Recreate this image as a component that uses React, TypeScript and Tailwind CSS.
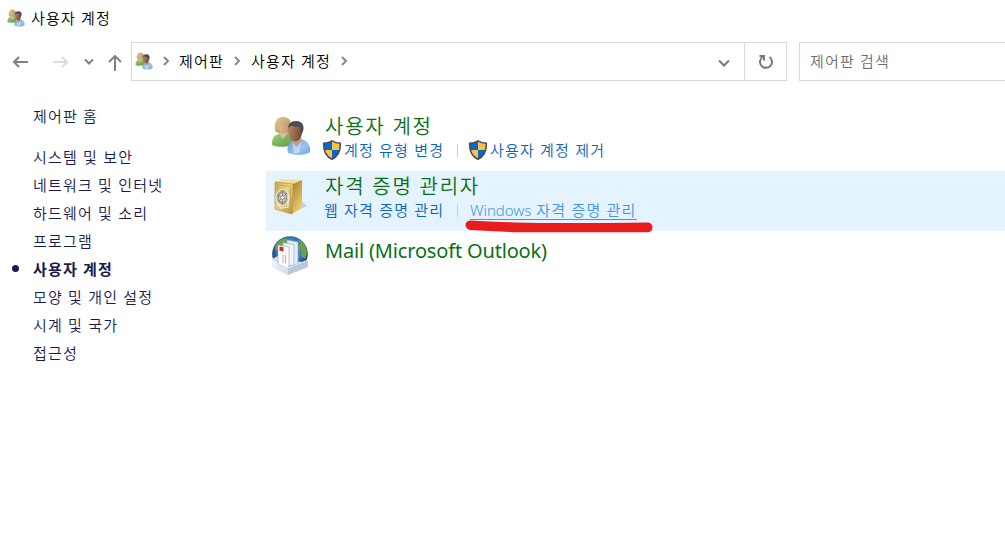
import type { ReactNode } from "react";

function PeopleIcon({ className }: { className: string }) {
  return (
    <svg viewBox="0 0 40 40" className={className} aria-hidden="true">
      <defs>
        <linearGradient id="greenShirt" x1="0" y1="0" x2="1" y2="1">
          <stop offset="0" stopColor="#a3cb80" />
          <stop offset="1" stopColor="#5c9c42" />
        </linearGradient>
        <linearGradient id="blueShirt" x1="0" y1="0" x2="1" y2="1">
          <stop offset="0" stopColor="#6596d3" />
          <stop offset="0.6" stopColor="#9cc4ec" />
          <stop offset="1" stopColor="#6fa1d8" />
        </linearGradient>
        <linearGradient id="blondHair" x1="0" y1="0" x2="1" y2="1">
          <stop offset="0" stopColor="#e3cf91" />
          <stop offset="1" stopColor="#a58a50" />
        </linearGradient>
        <linearGradient id="paleFace" x1="0" y1="0" x2="1" y2="0">
          <stop offset="0" stopColor="#e2b797" />
          <stop offset="1" stopColor="#c79b77" />
        </linearGradient>
        <linearGradient id="darkFace" x1="0" y1="0" x2="1" y2="0.3">
          <stop offset="0" stopColor="#c08a69" />
          <stop offset="1" stopColor="#734d3a" />
        </linearGradient>
      </defs>
      <path d="M1 28C1 21 4 18.500 9 18L16 17C21 18 22 22 21 29C15 31.500 6 31 1.500 29.500Z" fill="url(#greenShirt)" />
      <path d="M4 15C3 7 5 1 12 1C19 1 21 6 20 16C15 19 9 19 4 15Z" fill="url(#blondHair)" />
      <path d="M8 17L12 23L17 16Z" fill="#dfc0a0" />
      <path d="M8 9C10 9 13 8 14.500 6.500L17 9C18 14 15 18 12.500 18C10 18 8 14 8 9Z" fill="url(#paleFace)" />
      <path d="M17 37C15.500 30 17 26 23 24.500L31 23.500C37 25 40 30 39 36C34 39.500 24 40 17 37Z" fill="url(#blueShirt)" />
      <path d="M21 25L25 31L31 24L29 20H21Z" fill="#c99b7c" />
      <path d="M21 26L23 37H28L31 25L26 31Z" fill="#d8e8f7" opacity="0.6" />
      <path d="M17.500 13C17 20 20 25 24 25.500C29 25 32 19 31 12L27 8H19Z" fill="url(#darkFace)" />
      <path d="M17.500 13C16.500 8 20 5 25 5C32 5 34 10 31.500 17L30 15L28.500 11L19 10Z" fill="#4b4d53" />
    </svg>
  );
}

function SafeIcon() {
  return (
    <svg viewBox="0 0 40 40" className="size-10" aria-hidden="true">
      <defs>
        <linearGradient id="safeFront" x1="0" y1="0" x2="1" y2="1">
          <stop offset="0" stopColor="#c9a94f" />
          <stop offset="0.45" stopColor="#ecd482" />
          <stop offset="1" stopColor="#b88c31" />
        </linearGradient>
        <linearGradient id="safeSide" x1="0" y1="0" x2="0.5" y2="1">
          <stop offset="0" stopColor="#a57a28" />
          <stop offset="1" stopColor="#edcc70" />
        </linearGradient>
      </defs>
      <path d="M19 38L36 30L32 26Z" fill="#adbdc8" opacity="0.6" />
      <path d="M4 6L11 3L31 4L22 8Z" fill="#f1df9b" />
      <path d="M22 8L31 4V32L21 38Z" fill="url(#safeSide)" />
      <path d="M4 6L22 8L21 38L4 33Z" fill="url(#safeFront)" stroke="#b08f45" strokeWidth="0.7" />
      <path d="M6.500 9L19.500 10.500V34L6.500 30.500Z" fill="none" stroke="#c4a14e" strokeWidth="0.8" />
      <ellipse cx="11.500" cy="21.500" rx="6.500" ry="8" fill="#aca894" stroke="#eeeadb" strokeWidth="1.200" />
      <ellipse cx="11.500" cy="21.500" rx="4" ry="5" fill="#d8d5c7" stroke="#8f8a78" strokeWidth="1" />
      <path d="M11.500 14V29M6 19L17 24M7 26L16 17" stroke="#7d796d" strokeWidth="0.8" />
      <circle cx="11.500" cy="21.500" r="1.800" fill="#fff" stroke="#6f6a55" strokeWidth="0.7" />
      <path d="M6 28L10 32L17 31V17" fill="none" stroke="#f0eee5" strokeWidth="1.200" />
    </svg>
  );
}

function MailIcon() {
  return (
    <svg viewBox="0 0 40 40" className="size-10" aria-hidden="true">
      <defs>
        <radialGradient id="globe" cx="0.5" cy="0.4" r="0.6">
          <stop offset="0" stopColor="#8bcaf0" />
          <stop offset="0.55" stopColor="#397fc0" />
          <stop offset="1" stopColor="#102b5c" />
        </radialGradient>
        <linearGradient id="tray" x1="0" y1="0" x2="1" y2="1">
          <stop offset="0" stopColor="#f8f9fd" />
          <stop offset="1" stopColor="#c1cade" />
        </linearGradient>
      </defs>
      <circle cx="19" cy="18" r="17.800" fill="url(#globe)" />
      <path d="M4 12C6 6 10 3 15 2L17 5L12 8L9 12L5 15ZM27 3C33 6 36 12 36 17L34 23L30 20L31 15L27 11L29 7Z" fill="#6da345" />
      <path d="M1 23L7 20V24L32 26L37 24V31L17 39L1 31Z" fill="#d9e0ee" />
      <path d="M16 4L27 6V28L16 30Z" fill="#e8edf5" stroke="#8ba0b9" strokeWidth="0.6" />
      <path d="M12 6.500L23 8.500V29L12 31Z" fill="#f0f3f8" stroke="#8ba0b9" strokeWidth="0.6" />
      <path d="M7 9L18 11V32L7 29Z" fill="#fff" stroke="#8ba0b9" strokeWidth="0.6" />
      <path d="M8.500 10.500L12.500 11.200V15.500L8.500 14.800Z" fill="#e02a20" />
      <path d="M12 18.500V27M14.500 19V27.500" stroke="#9ea9bf" strokeWidth="0.9" />
      <path d="M1 24L6 27L8 30.500L12 31L14 29.500L17 32L37 24V31L17 39L1 31Z" fill="url(#tray)" />
      <path d="M17 32V38.500L37 31V24Z" fill="#bcc7dc" />
      <path d="M1 24L6 27L8 30.500L12 31L14 29.500L17 32L37 24" fill="none" stroke="#e8edf6" strokeWidth="0.8" />
    </svg>
  );
}

function ShieldIcon() {
  return (
    <svg viewBox="0 0 20 20" className="size-5 shrink-0" aria-hidden="true">
      <path d="M10 0.800C12.200 2.200 15 3.200 18.300 3.200C18.700 11 16.200 16.500 10 19.300C3.800 16.500 1.300 11 1.700 3.200C5 3.200 7.800 2.200 10 0.800Z" fill="#fbc14a" />
      <path d="M10 0.800C7.800 2.200 5 3.200 1.700 3.200C1.600 6 1.800 8 2.300 10H10ZM10 10H17.700C16.500 14.500 14.200 17.400 10 19.300Z" fill="#0769c6" />
      <path d="M10 0.900C12.200 2.300 15 3.200 18.300 3.200C18.700 11 16.200 16.500 10 19.200C3.800 16.500 1.300 11 1.700 3.200C5 3.200 7.800 2.300 10 0.900Z" fill="none" stroke="#474d50" strokeWidth="1.500" />
    </svg>
  );
}

function Stroke({ d, box, className }: { d: string; box: string; className: string }) {
  return (
    <svg viewBox={box} className={className} fill="none" stroke="currentColor" aria-hidden="true">
      <path d={d} />
    </svg>
  );
}

function Crumb() {
  return <Stroke box="0 0 8 10" d="M2 1L6 5L2 9" className="-mt-0.5 h-[10px] w-2 shrink-0 stroke-2 text-[#888]" />;
}

const categories = [
  "시스템 및 보안",
  "네트워크 및 인터넷",
  "하드웨어 및 소리",
  "프로그램",
  "사용자 계정",
  "모양 및 개인 설정",
  "시계 및 국가",
  "접근성",
];

function Entry({ icon, title, children, selected = false }: { icon: ReactNode; title: string; children?: ReactNode; selected?: boolean }) {
  return (
    <section className={selected ? "flex h-[60px] bg-[#e5f3fe] pl-[5px] pt-[5px]" : "flex h-[60px] pl-[5px] pt-[5px]"}>
      <div className="size-10 shrink-0">{icon}</div>
      <div className="ml-3 min-w-0 flex-1">
        <h2 className={children ? "-mt-1 ml-0.5 h-7 text-[20px] leading-[29px] tracking-[1.75px] text-[#0b6f16]" : "ml-0.5 h-[30px] text-[20px] font-normal leading-[29px] tracking-[-0.17px] text-[#0b6f16]"}>{title}</h2>
        {children && <div className="flex h-5 items-center text-[15px] leading-5 tracking-[1.2px] text-[#0864bd]">{children}</div>}
      </div>
    </section>
  );
}

function Divider() {
  return <span className="h-[13px] w-px shrink-0 bg-[#c9cdd1]" />;
}

export default function App() {
  return (
    <div className="h-[554px] w-[1005px] overflow-hidden bg-white font-['Noto_Sans','Noto_Sans_CJK_KR',sans-serif] text-[15px] font-[350] tracking-[1.2px] text-black">
      <header className="flex h-[35px] items-center pl-[7px]">
        <PeopleIcon className="size-[18px]" />
        <h1 className="ml-1.5 leading-5">사용자 계정</h1>
      </header>

      <nav className="mt-[7px] flex h-[39px] items-center">
        <Stroke box="0 0 16 14" d="M15 7H1M6 2L1 7L6 12" className="ml-[13px] h-[14px] w-4 stroke-2 text-[#808080]" />
        <Stroke box="0 0 16 14" d="M1 7H15M10 2L15 7L10 12" className="ml-[23px] h-[14px] w-4 stroke-2 text-[#ddd]" />
        <Stroke box="0 0 10 7" d="M1 1.500L5 5.500L9 1.500" className="ml-4 h-[7px] w-[10px] stroke-2 text-[#808080]" />
        <Stroke box="0 0 14 16" d="M7 16V1M1 7L7 1L13 7" className="ml-[14px] mt-[3px] h-4 w-[14px] stroke-2 text-[#808080]" />
        <div className="ml-[9px] flex h-[39px] w-[656px] items-center border border-[#d9d9d9]">
          <PeopleIcon className="-mt-0.5 ml-[3px] size-[18px]" />
          <div className="ml-[9px] flex items-center">
            <Crumb />
            <span className="ml-[9px] w-[50px] whitespace-nowrap">제어판</span>
            <span className="ml-1"><Crumb /></span>
            <span className="ml-[10px] w-[82px] whitespace-nowrap">사용자 계정</span>
            <span className="ml-[7px]"><Crumb /></span>
          </div>
          <Stroke box="0 0 12 8" d="M1 1.500L6 6.500L11 1.500" className="ml-auto mr-[14px] mt-[3px] h-2 w-3 stroke-2 text-[#777]" />
          <div className="flex h-full w-[42px] items-center justify-center border-l border-[#d9d9d9] text-[#777]">
            <svg viewBox="0 0 16 16" className="size-4" fill="none" stroke="currentColor" strokeWidth="2" aria-hidden="true">
              <path d="M11.500 3A6 6 0 1 1 4.500 3M1.500 2H6V6.500" />
            </svg>
          </div>
        </div>
        <div className="ml-3 flex h-[39px] flex-1 items-center border border-r-0 border-[#d9d9d9] pl-[10px] text-[#6d6d6d]">제어판 검색</div>
      </nav>

      <main className="flex">
        <aside className="w-[266px] pt-[21px] text-[#181b4d]">
          <div className="ml-[33px] h-[41px] leading-7">제어판 홈</div>
          <ul>
            {categories.map((name) => (
              <li key={name} className={name === "사용자 계정" ? "flex h-7 items-center font-bold tracking-[1.2px]" : "flex h-7 items-center"}>
                <span className="flex w-[33px] pl-3">{name === "사용자 계정" && <span className="-mt-px size-[7px] rounded-full bg-[#181b4d]" />}</span>
                {name}
              </li>
            ))}
          </ul>
        </aside>

        <div className="flex-1 pt-[30px]">
          <Entry icon={<PeopleIcon className="size-10" />} title="사용자 계정">
            <span className="-ml-px flex w-[135px] items-center gap-0.5"><ShieldIcon />계정 유형 변경</span>
            <Divider />
            <span className="ml-[10px] flex items-center gap-0.5"><ShieldIcon />사용자 계정 제거</span>
          </Entry>
          <Entry icon={<SafeIcon />} title="자격 증명 관리자" selected>
            <span className="ml-px w-[133px]">웹 자격 증명 관리</span>
            <Divider />
            <span className="relative ml-3 h-5 w-[167px] whitespace-nowrap border-b border-[#4593dc] text-[#4296e4]">
              <span className="tracking-[-0.05px]">Windows</span> 자격 증명 관리
              <svg viewBox="0 0 190 14" className="absolute -left-[6px] top-[19px] h-[14px] w-[190px]" aria-hidden="true">
                <path d="M6 1.500C20 2 35 3 50 3.500C90 4.500 140 4 184 3.500C190 4 190 13 184 13.200H50L6 11C0 10 0 2 6 1.500Z" fill="#e81c1d" />
              </svg>
            </span>
          </Entry>
          <Entry icon={<MailIcon />} title="Mail (Microsoft Outlook)" />
        </div>
      </main>
    </div>
  );
}
